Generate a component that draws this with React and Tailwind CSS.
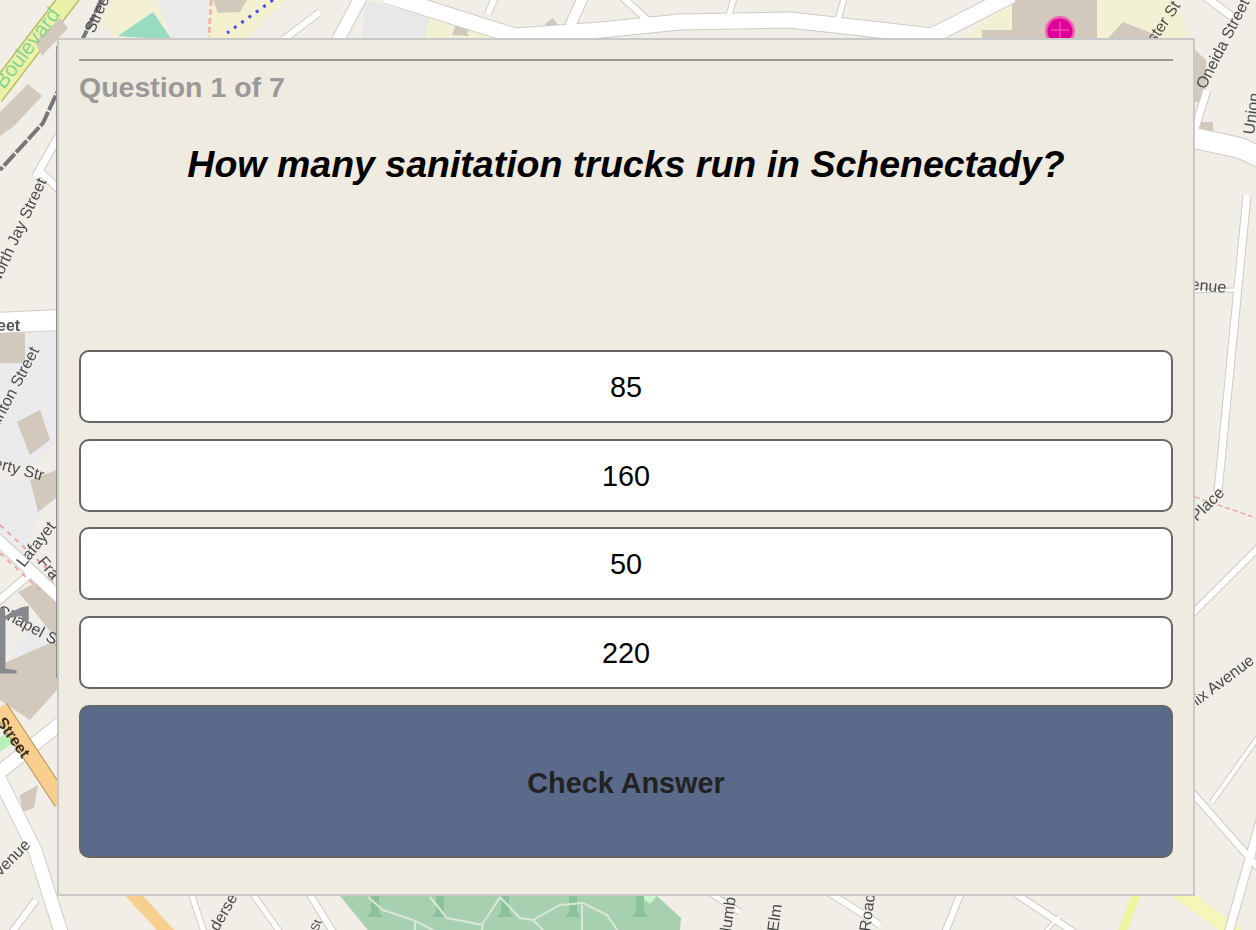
import React from 'react';

const answers = ['85', '160', '50', '220'];

// road centre lines, drawn white over a thin grey casing
const roads = [
  // top strip
  { d: 'M320 12 L283 40', w: 6 },
  { d: 'M362 -5 L338 40', w: 12 },
  { d: 'M385 -5 L515 36 L600 30 L680 22 L790 20 L880 30 L932 36 L1012 -5', w: 15 },
  { d: 'M496 -5 L488 14', w: 6 },
  { d: 'M584 -5 L570 26', w: 10 },
  { d: 'M620 -5 L652 24', w: 6 },
  { d: 'M735 -5 L728 18', w: 5 },
  { d: 'M845 -5 L838 20', w: 5 },
  { d: 'M1203 -5 L1234 18', w: 7 },
  // left strip
  { d: 'M38 170 L62 192', w: 7 },
  { d: 'M62 130 L35 178', w: 7 },
  { d: 'M-5 323 L62 320', w: 20 },
  { d: 'M-5 537 L62 600', w: 11 },
  { d: 'M30 574 L-5 604', w: 7 },
  { d: 'M62 722 L-5 776', w: 13 },
  { d: 'M-5 770 L35 850 L62 935', w: 13 },
  { d: 'M36 900 L10 935', w: 6 },
  // right strip
  { d: 'M1190 137 L1240 148 L1262 158', w: 20 },
  { d: 'M1193 135 L1207 90', w: 7 },
  { d: 'M1247 195 L1218 492', w: 7 },
  { d: 'M1190 291 L1235 290', w: 3 },
  { d: 'M1190 616 L1262 544', w: 6 },
  { d: 'M1190 790 L1262 872', w: 6 },
  { d: 'M1212 802 L1262 732', w: 4 },
  { d: 'M1228 935 L1262 815', w: 8 },
  // bottom strip
  { d: 'M307 890 L335 935', w: 6 },
  { d: 'M705 890 L740 912', w: 5 },
  { d: 'M825 890 L880 925', w: 6 },
  { d: 'M962 890 L944 935', w: 6 },
  { d: 'M1010 890 L1078 935', w: 6 },
  { d: 'M1060 916 L1042 935', w: 3 },
  { d: 'M190 890 L205 935', w: 5 },
  { d: 'M250 890 L282 935', w: 5 },
];

// tan building blocks
const buildings = [
  '35 42 60 18 68 28 42 56',
  '0 112 28 84 42 96 14 126 0 136',
  '0 333 25 333 25 363 0 363',
  '17 422 40 410 50 440 30 455',
  '30 480 57 470 57 497 38 512',
  '18 592 50 575 57 590 57 640 30 606',
  '0 665 57 640 57 690 30 720 0 700',
  '1012 0 1097 0 1097 40 982 40 982 30 1012 30',
  '1108 38 1123 22 1156 35 1156 40',
  '1195 50 1206 60 1206 102 1195 102',
  '1197 122 1213 122 1213 135 1197 135',
  '213 0 247 0 240 12 218 13',
  '460 28 462 21 470 26 466 36',
  '452 35 456 24 462 30 470 36',
  '545 24 553 18 560 28 552 36',
  '20 795 38 785 34 808 22 812',
];

const parkPaths = [
  'M368 897 L383 910 L413 920 L435 931',
  'M430 897 L447 918 L483 925',
  'M500 897 L483 923 L482 931',
  'M500 897 L520 918 L533 920 L560 905 L583 903 L607 915 L618 931',
  'M582 905 L582 931',
  'M415 922 L415 931',
  'M533 920 L544 931',
];

function MapBackground() {
  return (
    <svg className="absolute inset-0 blur-[0.6px]" width="1256" height="930" viewBox="0 0 1256 930">
      <rect width="1256" height="930" fill="#f1eee8" />

      {/* landuse */}
      <polygon points="112,0 165,0 175,40 118,40 100,20" fill="#f3f0d6" />
      <polygon points="118,36 153,12 172,40" fill="#97dcc0" />
      <polygon points="157,0 208,0 205,40 172,40" fill="#ebebeb" />
      <polygon points="212,0 285,0 245,40 208,40" fill="#f3f1cf" />
      <polygon points="365,0 430,18 425,40 362,40" fill="#e8e8e8" />
      <polygon points="430,14 530,40 425,40" fill="#f3f1d4" />
      <polygon points="960,40 1012,0 1175,0 1195,50 1195,60 1150,40" fill="#f3f1d4" />
      <polygon points="0,340 57,330 57,440 30,470 0,460" fill="#ebebed" />
      <polygon points="0,480 57,475 20,560 0,530" fill="#ebebed" />
      <polygon points="20,640 57,610 57,640 0,680" fill="#ebebed" />
      <polygon points="340,896 657,896 681,918 680,930 368,930" fill="#a6d0b0" />
      <polygon points="640,896 657,896 650,904" fill="#c6f8c8" />

      {/* boulevard and other yellow roads */}
      <path d="M-6 96 L72 -6" fill="none" stroke="#b8bb60" strokeWidth="20" />
      <path d="M-6 96 L72 -6" fill="none" stroke="#eaf2a8" strokeWidth="17" />
      <path d="M129 890 L170 935" fill="none" stroke="#f9cf90" strokeWidth="13" />
      <path d="M1138 890 L1121 935" fill="none" stroke="#eef5a0" strokeWidth="9" />
      <path d="M1176 890 L1238 935" fill="none" stroke="#f4f7b5" strokeWidth="14" />

      {buildings.map((points) => (
        <polygon key={points} points={points} fill="#d2c8bb" />
      ))}

      {roads.map((road) => (
        <path key={`c${road.d}`} d={road.d} fill="none" stroke="#cfcbc5" strokeWidth={road.w + 2} />
      ))}
      {roads.map((road) => (
        <path key={road.d} d={road.d} fill="none" stroke="#ffffff" strokeWidth={road.w} />
      ))}

      {/* orange road crosses over the white ones */}
      <polygon points="0,738 10,728 14,742 0,752" fill="#b8f0b8" />
      <path d="M0 708 L62 802" fill="none" stroke="#b89050" strokeWidth="17" />
      <path d="M0 708 L62 802" fill="none" stroke="#f9cf90" strokeWidth="15" />

      {/* railway */}
      <path d="M102 -2 L87 30 L55 97 L43 123 L0 170" fill="none" stroke="#777777" strokeWidth="4" strokeDasharray="16 2" />

      {/* dashed paths */}
      <path d="M273 0 L227 33" fill="none" stroke="#4a4ae0" strokeWidth="3" strokeDasharray="3 6" />
      <path d="M211 0 L209 37" fill="none" stroke="#eeb8a8" strokeWidth="3" strokeDasharray="6 3" />
      <path d="M0 525 L57 578" fill="none" stroke="#e8a8a0" strokeWidth="2" strokeDasharray="5 5" />
      <path d="M0 553 L40 590" fill="none" stroke="#e8a8a0" strokeWidth="2" strokeDasharray="5 5" />
      <path d="M1195 497 L1256 518" fill="none" stroke="#e8a8a0" strokeWidth="1.5" strokeDasharray="5 3" />

      {/* hospital marker */}
      <circle cx="1060" cy="31" r="15" fill="#ee62b0" />
      <circle cx="1060" cy="31" r="12.5" fill="#e0009a" />
      <path d="M1060 22 L1060 40 M1051 30 L1069 30" stroke="#f04ab0" strokeWidth="1.5" />

      {/* park trees */}
      {[375, 440, 505, 573, 640].map((x) => (
        <path key={x} d={`M${x - 4} 896 L${x + 4} 896 L${x + 4} 912 L${x + 8} 917 L${x - 8} 917 L${x - 4} 912 Z`} fill="#8cc298" />
      ))}
      {parkPaths.map((d) => (
        <path key={d} d={d} fill="none" stroke="#dbe6da" strokeWidth="2" />
      ))}

      {/* street labels */}
      <g fontFamily="'Liberation Sans', Arial, sans-serif" fontSize="16" fill="#4a4a4a">
        <text transform="translate(4 90) rotate(-53)" fill="#86d296" fontSize="21">Boulevard</text>
        <text transform="translate(94 34) rotate(-66)">Street</text>
        <text transform="translate(-2 286) rotate(-65)">North Jay Street</text>
        <text transform="translate(-3 331)" fontWeight="bold" fill="#555555">eet</text>
        <text transform="translate(-6 436) rotate(-62)">Clinton Street</text>
        <text transform="translate(-28 462) rotate(15)">Liberty Str</text>
        <text transform="translate(24 568) rotate(-52)">Lafayet</text>
        <text transform="translate(37 562) rotate(50)">Fra</text>
        <text transform="translate(-4 614) rotate(28)">Chapel St</text>
        <text transform="translate(-4 722) rotate(55)" fill="#3a3020" fontWeight="bold">Street</text>
        <text transform="translate(-7 884) rotate(-45)">Avenue</text>
        <text transform="translate(1172 288) rotate(5)">Avenue</text>
        <text transform="translate(1205 90) rotate(-63)">Oneida Street</text>
        <text transform="translate(1254 135) rotate(-82)">Union</text>
        <text transform="translate(1155 44) rotate(-56)">ster St</text>
        <text transform="translate(1197 522) rotate(-45)">Place</text>
        <text transform="translate(1163 732) rotate(-37)">Phoenix Avenue</text>
        <text transform="translate(218 932) rotate(-60)">derse</text>
        <text transform="translate(318 932) rotate(-70)" fontSize="12">St</text>
        <text transform="translate(731 932) rotate(-82)">lumb</text>
        <text transform="translate(778 932) rotate(-82)">Elm</text>
        <text transform="translate(870 932) rotate(-82)">Road</text>
      </g>
      <text x="-17" y="673" fontFamily="'Liberation Serif', serif" fontSize="141" fill="#85898d">r</text>
      <rect x="56" y="46" width="1" height="632" fill="#8a8a8a" />
    </svg>
  );
}

const App = () => {
  return (
    <div className="relative h-[930px] w-[1256px] overflow-hidden font-['Liberation_Sans',Arial,sans-serif]">
      <MapBackground />

      {/* Quiz panel */}
      <div className="relative ml-[57px] h-[858px] w-[1138px] translate-y-[38px] border-2 border-[#c9c9c9] bg-[#efebe1] px-5 pt-[19px]">
        <div className="border-t-2 border-[#999999] pt-[8px]">
          <h2 className="text-[28.5px] leading-[36px] font-bold text-[#999999]">Question 1 of 7</h2>
        </div>

        <h1 className="mt-[37px] h-[208px] text-center text-[37.5px] leading-[44px] font-bold text-black italic">
          How many sanitation trucks run in Schenectady?
        </h1>

        <div className="flex flex-col gap-[15.7px]">
          {answers.map((answer) => (
            <button
              key={answer}
              className="h-[73px] rounded-[10px] border-2 border-[#666666] bg-white pt-[2px] text-center text-[28.8px] text-black"
            >
              {answer}
            </button>
          ))}
          <button className="h-[153px] rounded-[10px] border-2 border-[#666666] bg-[#5a6a8a] pt-[4px] text-center text-[28.8px] font-bold text-[#222222]">
            Check Answer
          </button>
        </div>
      </div>
    </div>
  );
};

export default App;
